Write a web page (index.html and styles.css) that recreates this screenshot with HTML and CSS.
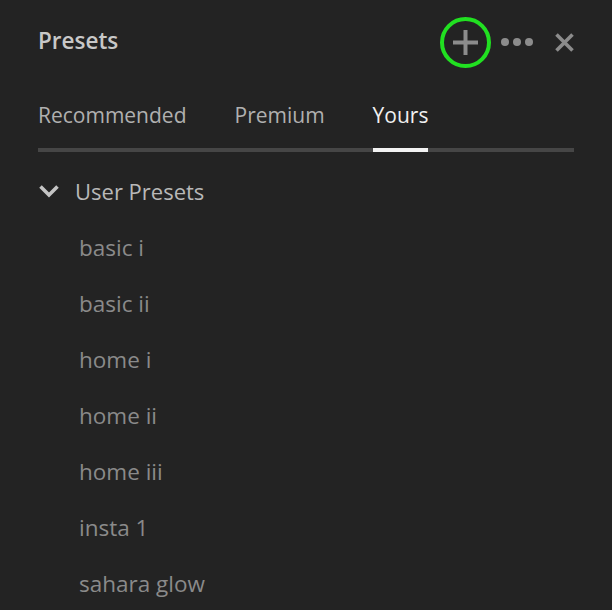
FILE: index.html
```html
<!DOCTYPE html>
<html lang="en">
<head>
  <meta charset="UTF-8">
  <title>Presets</title>
  <link rel="stylesheet" href="styles.css">
</head>
<body>
  <main class="panel">
    <header class="panel-head">
      <h1>Presets</h1>
      <div class="actions">
        <button class="icon add" title="Add">
          <svg width="25" height="25" viewBox="0 0 25 25"><path d="M12.5 0v25M0 12.5h25" stroke="currentColor" stroke-width="4"/></svg>
        </button>
        <button class="icon more" title="More">
          <svg width="32" height="8" viewBox="0 0 32 8"><circle cx="4" cy="4" r="4"/><circle cx="16" cy="4" r="4"/><circle cx="28" cy="4" r="4"/></svg>
        </button>
        <button class="icon close" title="Close">
          <svg width="19" height="19" viewBox="0 0 19 19"><path d="M1.5 1.5l16 16M17.5 1.5l-16 16" stroke="currentColor" stroke-width="3.6"/></svg>
        </button>
      </div>
    </header>

    <nav class="tabs">
      <a href="#">Recommended</a>
      <a href="#">Premium</a>
      <a href="#" class="active">Yours</a>
    </nav>

    <section class="group">
      <div class="group-title">
        <svg width="22" height="14" viewBox="0 0 22 14"><path d="M2.5 2.5l8.5 8.5 8.5-8.5" stroke="currentColor" stroke-width="3.6" fill="none"/></svg>
        <span>User Presets</span>
      </div>
      <ul class="presets">
        <li>basic i</li>
        <li>basic ii</li>
        <li>home i</li>
        <li>home ii</li>
        <li>home iii</li>
        <li>insta 1</li>
        <li>sahara glow</li>
      </ul>
    </section>
  </main>
</body>
</html>
```

FILE: styles.css
```css
* {
  box-sizing: border-box;
  margin: 0;
  padding: 0;
}

body {
  background-color: #232323;
  font-family: "Open Sans", Lato, sans-serif;
  height: 610px;
  overflow: hidden;
}

.panel {
  padding: 0 38px;
}

.panel-head {
  display: flex;
  align-items: center;
  justify-content: space-between;
  height: 84px;
}

.panel-head h1 {
  font-size: 22.5px;
  font-weight: 600;
  color: #c8c8c8;
  margin-top: -4px;
}

.actions {
  display: flex;
  align-items: center;
}

.icon {
  border: none;
  background: none;
  color: #8c8c8c;
  fill: #8c8c8c;
  display: flex;
  align-items: center;
  justify-content: center;
}

.add {
  width: 51px;
  height: 51px;
  border: 4px solid #21e021;
  border-radius: 50%;
  margin-right: 10px;
}

.more {
  margin-right: 22px;
}

.tabs {
  display: flex;
  gap: 48px;
  border-bottom: 4px solid #464646;
  height: 68px;
}

.tabs a {
  font-size: 21px;
  color: #b0b0b0;
  text-decoration: none;
  padding-top: 17px;
  margin-bottom: -4px;
  border-bottom: 4px solid transparent;
}

.tabs a.active {
  color: #f0f0f0;
  border-bottom-color: #f2f2f2;
}

.group-title {
  display: flex;
  align-items: center;
  height: 74px;
  color: #b8b8b8;
  font-size: 22px;
  gap: 15px;
  padding-top: 4px;
}

.group-title svg {
  color: #c4c4c4;
}

.presets {
  list-style: none;
  margin-top: -6px;
}

.presets li {
  height: 56px;
  line-height: 56px;
  padding-left: 41px;
  font-size: 22.5px;
  color: #8a8a8a;
}
```
